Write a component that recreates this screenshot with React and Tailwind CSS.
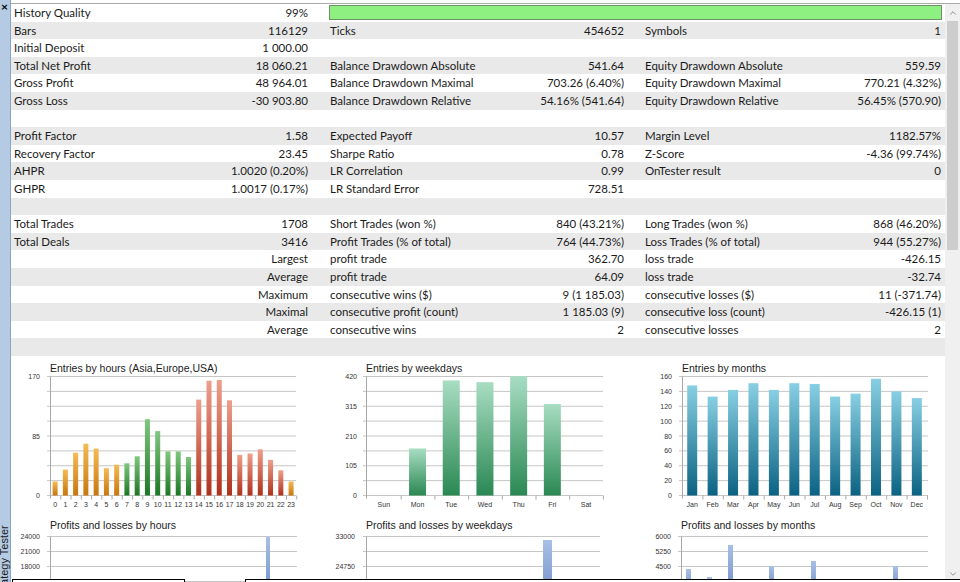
import { ChevronUp, ChevronDown } from 'lucide-react';

const rows = [
  ['History Quality', '99%', 'BAR'],
  ['Bars', '116129', 'Ticks', '454652', 'Symbols', '1'],
  ['Initial Deposit', '1 000.00', '', '', '', ''],
  ['Total Net Profit', '18 060.21', 'Balance Drawdown Absolute', '541.64', 'Equity Drawdown Absolute', '559.59'],
  ['Gross Profit', '48 964.01', 'Balance Drawdown Maximal', '703.26 (6.40%)', 'Equity Drawdown Maximal', '770.21 (4.32%)'],
  ['Gross Loss', '-30 903.80', 'Balance Drawdown Relative', '54.16% (541.64)', 'Equity Drawdown Relative', '56.45% (570.90)'],
  [],
  ['Profit Factor', '1.58', 'Expected Payoff', '10.57', 'Margin Level', '1182.57%'],
  ['Recovery Factor', '23.45', 'Sharpe Ratio', '0.78', 'Z-Score', '-4.36 (99.74%)'],
  ['AHPR', '1.0020 (0.20%)', 'LR Correlation', '0.99', 'OnTester result', '0'],
  ['GHPR', '1.0017 (0.17%)', 'LR Standard Error', '728.51', '', ''],
  [],
  ['Total Trades', '1708', 'Short Trades (won %)', '840 (43.21%)', 'Long Trades (won %)', '868 (46.20%)'],
  ['Total Deals', '3416', 'Profit Trades (% of total)', '764 (44.73%)', 'Loss Trades (% of total)', '944 (55.27%)'],
  ['', 'Largest', 'profit trade', '362.70', 'loss trade', '-426.15'],
  ['', 'Average', 'profit trade', '64.09', 'loss trade', '-32.74'],
  ['', 'Maximum', 'consecutive wins ($)', '9 (1 185.03)', 'consecutive losses ($)', '11 (-371.74)'],
  ['', 'Maximal', 'consecutive profit (count)', '1 185.03 (9)', 'consecutive loss (count)', '-426.15 (1)'],
  ['', 'Average', 'consecutive wins', '2', 'consecutive losses', '2'],
  [],
];

const hours = [20, 37, 61, 74, 67, 39, 44, 46, 56, 109, 92, 63, 63, 55, 137, 164, 165, 136, 58, 60, 66, 51, 36, 20];
const weekdays = [0, 166, 406, 400, 421, 323, 0];
const dayNames = ['Sun', 'Mon', 'Tue', 'Wed', 'Thu', 'Fri', 'Sat'];
const months = [148, 133, 142, 151, 142, 151, 150, 133, 137, 157, 140, 131];
const monthNames = ['Jan', 'Feb', 'Mar', 'Apr', 'May', 'Jun', 'Jul', 'Aug', 'Sep', 'Oct', 'Nov', 'Dec'];

function hourFill(i) {
  if (i <= 6 || i === 23) return 'url(#gOrange)';
  if (i <= 13) return 'url(#gGreen)';
  return 'url(#gRed)';
}

function Gradients() {
  return (
    <defs>
      <linearGradient id="gOrange" x1="0" y1="0" x2="0" y2="1">
        <stop offset="0" stopColor="#f4bb55" />
        <stop offset="1" stopColor="#c8760c" />
      </linearGradient>
      <linearGradient id="gGreen" x1="0" y1="0" x2="0" y2="1">
        <stop offset="0" stopColor="#7fc77f" />
        <stop offset="1" stopColor="#1d7623" />
      </linearGradient>
      <linearGradient id="gRed" x1="0" y1="0" x2="0" y2="1">
        <stop offset="0" stopColor="#ee9f8c" />
        <stop offset="1" stopColor="#b0301b" />
      </linearGradient>
      <linearGradient id="gSea" x1="0" y1="0" x2="0" y2="1">
        <stop offset="0" stopColor="#a8ddc2" />
        <stop offset="1" stopColor="#2a8853" />
      </linearGradient>
      <linearGradient id="gTeal" x1="0" y1="0" x2="0" y2="1">
        <stop offset="0" stopColor="#88cfe3" />
        <stop offset="1" stopColor="#0a6282" />
      </linearGradient>
      <linearGradient id="gBlue" x1="0" y1="0" x2="0" y2="1">
        <stop offset="0" stopColor="#a9c0e6" />
        <stop offset="1" stopColor="#7896cc" />
      </linearGradient>
    </defs>
  );
}

// one chart panel drawn on its own svg
function Chart({ w, h, title, titleY = 16, axisX, right, grid, labelRight, bottom, bars, xLabels, catTicks }) {
  return (
    <svg width={w} height={h} className="block shrink-0" style={{ fontFamily: '"Liberation Sans", Arial, sans-serif' }}>
      <Gradients />
      <text x={axisX} y={titleY} fontSize="10.5" fill="#222">{title}</text>
      {grid.map((g, i) => (
        <g key={i}>
          <line x1={axisX - 3} x2={right} y1={g.y} y2={g.y} stroke="#c6c6c6" strokeWidth="1" />
          {g.label && (
            <text x={labelRight} y={g.y + 2.5} fontSize="7" fill="#333" textAnchor="end">{g.label}</text>
          )}
        </g>
      ))}
      <line x1={axisX + 0.5} x2={axisX + 0.5} y1={grid[0].y} y2={bottom + 3} stroke="#a8a8a8" />
      {catTicks && catTicks.map((x, i) => (
        <line key={i} x1={x} x2={x} y1={bottom} y2={bottom + 4} stroke="#a8a8a8" />
      ))}
      {bars.map((b, i) => (
        <rect key={i} x={b.x} y={b.y} width={b.w} height={b.h} fill={b.fill} />
      ))}
      {xLabels && xLabels.map((l, i) => (
        <text key={i} x={l.x} y={bottom + 11} fontSize="7" fill="#333" textAnchor="middle">{l.t}</text>
      ))}
    </svg>
  );
}

function TopCharts() {
  const top = 20.5;
  const bottom = 139.5;
  const ph = bottom - top;
  const grid = Array.from({ length: 9 }, (_, i) => ({ y: top + i * (ph / 8) }));

  const g1 = grid.map((g, i) => ({ ...g, label: i === 0 ? '170' : i === 4 ? '85' : i === 8 ? '0' : '' }));
  const c1 = 10.26;
  const bars1 = hours.map((v, i) => {
    const hh = (v / 170) * ph;
    return { x: 39 + c1 * i + 2.6, y: bottom - hh, w: 5, h: hh, fill: hourFill(i) };
  });
  const lab1 = hours.map((_, i) => ({ x: 39 + c1 * i + c1 / 2, t: String(i) }));
  const ticks1 = hours.map((_, i) => 39.5 + c1 * (i + 1));

  const g2 = grid.map((g, i) => ({ ...g, label: ['420', '', '315', '', '210', '', '105', '', '0'][i] }));
  const c2 = 33.7;
  const bars2 = weekdays.map((v, i) => {
    const hh = (v / 420) * ph;
    return { x: 41 + c2 * i + (c2 - 17) / 2, y: bottom - hh, w: 17, h: hh, fill: 'url(#gSea)' };
  });
  const lab2 = dayNames.map((t, i) => ({ x: 41 + c2 * i + c2 / 2, t }));
  const ticks2 = dayNames.map((_, i) => 41.5 + c2 * (i + 1));

  const g3 = grid.map((g, i) => ({ ...g, label: String(160 - i * 20) }));
  const c3 = 20.42;
  const bars3 = months.map((v, i) => {
    const hh = (v / 160) * ph;
    return { x: 41 + c3 * i + (c3 - 10) / 2, y: bottom - hh, w: 10, h: hh, fill: 'url(#gTeal)' };
  });
  const lab3 = monthNames.map((t, i) => ({ x: 41 + c3 * i + c3 / 2, t }));
  const ticks3 = monthNames.map((_, i) => 41.5 + c3 * (i + 1));

  return (
    <div className="flex">
      <Chart w={315} h={154} title="Entries by hours (Asia,Europe,USA)" axisX={39} right={285} grid={g1} labelRight={29} bottom={bottom} bars={bars1} xLabels={lab1} catTicks={ticks1} />
      <Chart w={315} h={154} title="Entries by weekdays" axisX={40} right={277} grid={g2} labelRight={31} bottom={bottom} bars={bars2} xLabels={lab2} catTicks={ticks2} />
      <Chart w={304} h={154} title="Entries by months" axisX={41} right={287} grid={g3} labelRight={31} bottom={bottom} bars={bars3} xLabels={lab3} catTicks={ticks3} />
    </div>
  );
}

function BottomCharts() {
  const ys = [26.5, 41.5, 56.5, 71.5];
  const mk = (labels) => ys.map((y, i) => ({ y, label: labels[i] }));
  return (
    <div className="flex">
      <Chart w={315} h={72} title="Profits and losses by hours" titleY={19} axisX={39} right={286} grid={mk(['24000', '21000', '18000', ''])} labelRight={29} bottom={90}
        bars={[{ x: 255, y: 27, w: 4, h: 50, fill: 'url(#gBlue)' }]} />
      <Chart w={315} h={72} title="Profits and losses by weekdays" titleY={19} axisX={40} right={274} grid={mk(['33000', '', '24750', ''])} labelRight={29} bottom={90}
        bars={[{ x: 217, y: 30, w: 9, h: 50, fill: 'url(#gBlue)' }]} />
      <Chart w={304} h={72} title="Profits and losses by months" titleY={19} axisX={40} right={287} grid={mk(['6000', '5250', '4500', ''])} labelRight={30} bottom={90}
        bars={[
          { x: 45, y: 59, w: 5, h: 20, fill: 'url(#gBlue)' },
          { x: 66, y: 67, w: 5, h: 20, fill: 'url(#gBlue)' },
          { x: 87, y: 35, w: 5, h: 40, fill: 'url(#gBlue)' },
          { x: 128, y: 56, w: 5, h: 20, fill: 'url(#gBlue)' },
          { x: 170, y: 51, w: 5, h: 30, fill: 'url(#gBlue)' },
          { x: 252, y: 56, w: 5, h: 20, fill: 'url(#gBlue)' },
        ]} />
    </div>
  );
}

function Row({ r, i }) {
  const bg = i % 2 === 1 ? 'bg-[#e9e9e9]' : 'bg-white';
  return (
    <div className={`flex h-[17.72px] items-center ${bg}`}>
      <div className="w-[315px] flex justify-between pl-[3px] pr-[18px]">
        <span>{r[0]}</span>
        <span>{r[1]}</span>
      </div>
      {r[2] === 'BAR' ? (
        <div className="flex-1 pl-[3px] pr-[3px]">
          <div className="h-[15px] bg-[#8ef080] border border-[#6f8f6a]" />
        </div>
      ) : (
        <>
          <div className="w-[315px] flex justify-between pl-[4px] pr-[17px]">
            <span>{r[2]}</span>
            <span>{r[3]}</span>
          </div>
          <div className="w-[304px] flex justify-between pl-[4px] pr-[4px]">
            <span>{r[4]}</span>
            <span>{r[5]}</span>
          </div>
        </>
      )}
    </div>
  );
}

export default function App() {
  return (
    <div className="relative w-[960px] h-[582px] overflow-hidden flex bg-white text-[#1b1b1b] font-['Lato',sans-serif] text-[11.5px]">
      {/* dock strip */}
      <div className="relative w-[11px] shrink-0 bg-[#b5cbe4] border-r border-[#8ca4c0]">
        <div className="text-[12px] font-bold leading-[12px] pl-[1px] pt-[1px] text-black">×</div>
        <div className="absolute left-[-1px] bottom-[-17px] origin-top-left -rotate-90 translate-y-full whitespace-nowrap text-[11px] leading-[11px] text-[#1b1b1b] font-['Liberation_Sans',sans-serif]">
          Strategy Tester
        </div>
      </div>

      <div className="flex-1 flex flex-col">
        <div className="h-[3px] bg-white" />
        <div className="flex-1 flex border-t border-[#a9a9a9] min-h-0">
          <div className="flex-1 flex flex-col min-w-0 leading-none">
            {rows.map((r, i) => (
              r.length ? <Row key={i} r={r} i={i} /> : <div key={i} className={`h-[17.72px] ${i % 2 === 1 ? 'bg-[#e9e9e9]' : 'bg-white'}`} />
            ))}
            <TopCharts />
            <BottomCharts />
          </div>
          {/* scrollbar */}
          <div className="w-[15px] shrink-0 bg-[#f0f0f0] flex flex-col items-center">
            <ChevronUp size={10} strokeWidth={1.6} className="text-[#606060] mt-[4px]" />
            <div className="w-[11px] h-[229px] bg-[#cdcdcd] mt-[3px]" />
            <div className="flex-1" />
            <ChevronDown size={10} strokeWidth={1.6} className="text-[#606060] mb-[3px]" />
          </div>
        </div>
      </div>

      {/* bottom overlapped panels */}
      <div className="absolute left-[12px] top-[579px] w-[173px] h-[10px] bg-white border border-black" />
      <div className="absolute left-[245px] top-[579px] right-[-2px] h-[10px] bg-white border border-black" />
    </div>
  );
}
